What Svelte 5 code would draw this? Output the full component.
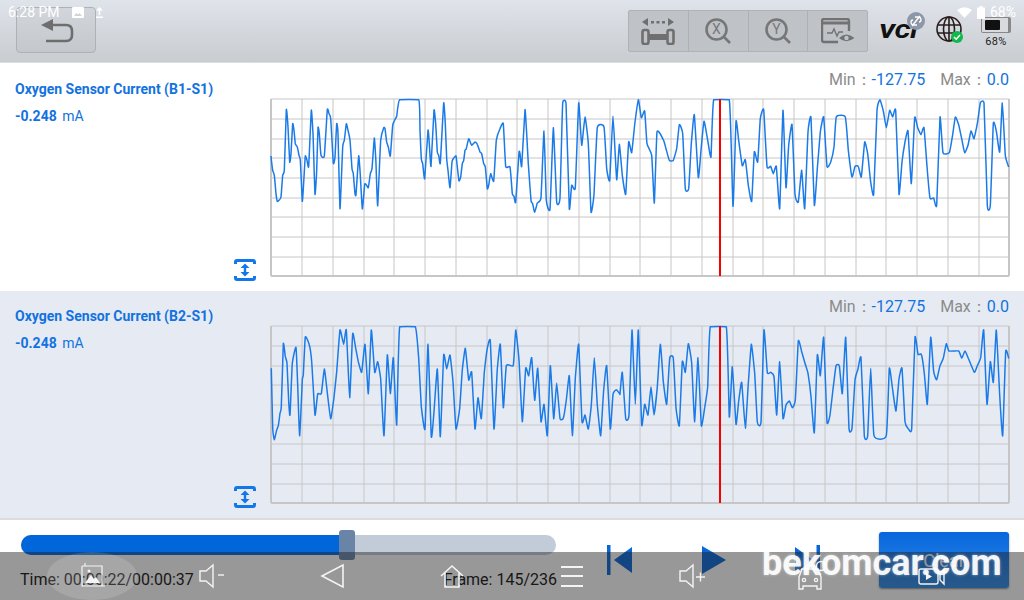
<script>
	// traces are read off at 3x, so each segment carries its own x offset
	const wave1 = [
		[220, '153,197 158,240 163,255 168,310 172,333 177,330 183,320 188,255 193,240 199,58 204,110 209,215 213,190 218,100 222,120 226,160 232,170 237,195 241,210 247,333 252,260 256,197 261,210 266,228 274,60 279,130 285,312 290,240 294,112 298,130 303,195 313,197 322,58 327,70 332,85 340,218 345,200 350,100 354,130 360,355 368,170 373,150 379,100 384,120 390,150 396,235 400,250 405,310 408,312 416,197 420,240 427,356 434,282 440,285 445,292 451,250 456,235 463,143 468,220 473,346 482,150 491,112 495,115 500,155 505,170 511,197 518,105 524,90 530,78 539,28 596,28 600,120 604,205 608,220 614,265 624,120 628,160 633,228 642,60 647,100 652,185 656,195 661,218 671,38 676,100 680,205 684,240 690,292 696,215 700,205 708,197 713,240 717,272 722,260 727,220 731,210 735,180 739,175 746,145 755,165 765,155 772,162 780,185 785,190 791,220 796,230 802,295 806,285 812,250 821,272 829,150 840,115 850,100 857,228 870,230 877,310 882,318 887,335 897,187'],
		[520, '0,190 5,228 15,58 20,130 25,220 33,330 38,340 44,366 52,338 63,322 72,122 79,330 90,356 100,112 110,335 120,322 128,38 138,38 148,355 155,285 166,292 176,38 185,165 195,80 205,160 213,365 222,312 232,112 252,110 260,235 269,270 279,78 290,268 298,162 307,255 317,312 326,155 335,187 345,95 355,28 364,82 374,62 381,160 395,195 403,338 411,125 430,148 438,175 448,210 460,210 470,175 478,103 488,130 496,295 506,295 514,160 523,73 535,262 543,180 552,93 563,150 573,200 581,28 628,28 639,348 648,93 656,150 667,226 676,208 685,285 695,333 703,185 713,215 721,85 731,58 741,228 752,228 760,250 769,228 779,355 789,60 798,292 806,165 816,103 825,312 835,335 845,240 854,355 864,125 873,82 883,345 892,235 901,125 911,80 921,228 932,215 942,170 949,80 976,80 985,180 996,260 1005,228 1015,228 1024,260 1034,155 1043,190 1052,275 1061,312 1071,60 1080,28 1090,62 1099,112 1109,60 1118,80 1127,60 1137,312 1146,215 1155,155 1164,122 1174,280 1184,82 1193,112 1203,133 1212,112 1221,228 1230,323 1241,323 1250,345 1260,80 1269,187 1288,187 1297,140 1306,80 1316,103 1325,145 1334,187 1344,165 1353,122 1362,145 1372,100 1381,38 1392,38 1402,345 1411,345 1420,100 1429,122 1439,185 1447,38 1456,195 1466,230']
	];
	const wave2 = [
		[220, '154,150 158,330 163,364 170,335 175,322 180,285 184,265 190,76 196,115 201,135 206,250 210,290 217,135 228,87 233,200 239,352 247,185 250,170 256,56 268,80 275,130 285,290 293,227 304,226 313,152 321,215 332,301 341,245 350,160 360,35 371,78 379,35 389,238 398,46 407,90 415,130 425,162 435,78 445,226 454,35 464,162 473,130 482,182 492,352 502,110 511,226 520,118 530,320 539,25 586,25 596,120 604,265 615,332 624,78 634,355 642,280 652,152 661,355 671,110 680,152 690,110 699,190 708,332 719,270 727,155 736,90 746,185 755,162 765,332 774,238 784,301 793,162 802,90 811,68 822,332 832,152 841,78 850,268 859,142 880,141 887,35 897,125 907,310 917,150 926,172 935,118 944,246 953,150 963,310 972,258 982,352 991,142 1001,301 1010,195 1020,300 1030,300 1039,245 1048,172 1057,352 1066,180 1076,78 1086,310 1095,290 1105,332 1114,260 1123,118 1132,260 1142,352 1151,215 1160,142 1171,332 1179,228 1189,214 1199,226'],
		[620, '0,226 7,162 17,300 27,290 36,35 46,258 55,35 65,320 74,258 84,290 93,205 102,290 112,205 121,78 130,190 140,258 149,120 160,120 168,268 178,322 187,130 196,162 205,76 215,135 224,310 234,118 244,322 254,268 263,205 271,25 319,25 328,296 337,145 348,318 356,248 365,192 376,330 385,195 394,78 404,165 412,311 423,311 432,35 442,162 452,162 462,175 470,290 479,130 489,300 498,260 508,248 517,268 526,245 535,68 545,100 555,135 564,165 573,235 583,343 592,110 601,172 611,57 621,311 630,290 640,205 648,142 658,142 667,226 677,57 687,330 696,330 705,185 714,152 723,118 733,352 743,352 752,150 762,352 799,352 808,150 818,215 828,278 837,182 846,150 855,310 865,331 875,331 885,57 894,108 904,108 913,165 922,258 932,57 941,160 950,184 960,142 970,120 979,76 987,98 1016,98 1025,120 1035,98 1045,120 1063,162 1072,142 1082,118 1091,35 1101,258 1111,130 1120,192 1129,35 1139,230 1148,352 1157,100 1166,120']
	];

	const vLines = [31, 62, 93, 123, 154, 185, 216, 246, 277, 308, 339, 369, 400, 431, 462, 492, 523, 554, 585, 615, 646, 677, 708, 738];
	const hLines = [20, 40, 59, 79, 99, 118, 138, 158];

	// light catmull-rom so the peaks round off like the device trace
	function toPath(segments, top) {
		const pts = [];
		for (const [left, raw] of segments) {
			for (const pair of raw.split(' ')) {
				const [x, y] = pair.split(',').map(Number);
				pts.push([left + x / 3 - 271, (y - top) / 3]);
			}
		}
		const k = 0.07;
		let d = `M${pts[0][0].toFixed(1)} ${pts[0][1].toFixed(1)}`;
		for (let i = 0; i < pts.length - 1; i++) {
			const a = pts[Math.max(i - 1, 0)];
			const b = pts[i];
			const c = pts[i + 1];
			const e = pts[Math.min(i + 2, pts.length - 1)];
			const c1x = b[0] + (c[0] - a[0]) * k;
			const c1y = Math.max(0.4, b[1] + (c[1] - a[1]) * k);
			const c2x = c[0] - (e[0] - b[0]) * k;
			const c2y = Math.max(0.4, c[1] - (e[1] - b[1]) * k);
			d += `C${c1x.toFixed(1)} ${c1y.toFixed(1)} ${c2x.toFixed(1)} ${c2y.toFixed(1)} ${c[0].toFixed(1)} ${c[1].toFixed(1)}`;
		}
		return d;
	}

	const channels = [
		{ name: 'Oxygen Sensor Current (B1-S1)', path: toPath(wave1, 26), alt: false },
		{ name: 'Oxygen Sensor Current (B2-S1)', path: toPath(wave2, 23), alt: true }
	];

	const navCells = ['image', 'voldown', 'back', 'home', 'menu', 'volup', 'car', 'video'];
</script>

<div class="screen">
	<header class="topbar">
		<button class="back" type="button" aria-label="Back">
			<svg width="36" height="26" viewBox="0 0 36 26">
				<path d="M3 8 L15 2 V14 Z" fill="#6e6e6e" />
				<path d="M13 8 H28 Q34 8 34 14 V18 Q34 24 28 24 H8" fill="none" stroke="#6e6e6e" stroke-width="2.6" />
			</svg>
		</button>
		<div class="tools">
			<div class="tool">
				<svg width="34" height="28" viewBox="0 0 34 28" fill="#6f6f6f">
					<path d="M1 5 L7 1 V9 Z M33 5 L27 1 V9 Z" />
					<path d="M10 4h3v2.4h-3z M15.5 4h3v2.4h-3z M21 4h3v2.4h-3z" />
					<rect x="1.5" y="13" width="6" height="14" rx="2" fill="none" stroke="#6f6f6f" stroke-width="2.6" />
					<rect x="26.5" y="13" width="6" height="14" rx="2" fill="none" stroke="#6f6f6f" stroke-width="2.6" />
					<rect x="7" y="17" width="20" height="6" />
				</svg>
			</div>
			<div class="tool">
				<svg width="26" height="26" viewBox="0 0 26 26" fill="none" stroke="#777" stroke-width="2.6">
					<circle cx="11.5" cy="11.5" r="10" />
					<path d="M19 19 L25 25" />
					<text x="11.5" y="16" text-anchor="middle" class="axis">X</text>
				</svg>
			</div>
			<div class="tool">
				<svg width="26" height="26" viewBox="0 0 26 26" fill="none" stroke="#777" stroke-width="2.6">
					<circle cx="11.5" cy="11.5" r="10" />
					<path d="M19 19 L25 25" />
					<text x="11.5" y="16" text-anchor="middle" class="axis">Y</text>
				</svg>
			</div>
			<div class="tool">
				<svg width="34" height="26" viewBox="0 0 34 26" fill="none" stroke="#727272" stroke-width="2.4">
					<path d="M17 24 H3 Q1 24 1 22 V3 Q1 1 3 1 H26 Q28 1 28 3 V13" />
					<path d="M1 5 H28" stroke-width="3" />
					<path d="M6 15 H11 L13 11 L16 18 L18 14 H22" stroke-width="1.4" />
					<path d="M18 20 Q25 13 33.5 20 Q25 26.5 18 20 Z" fill="#727272" stroke="none" />
					<circle cx="25.5" cy="20" r="2.2" fill="#c0c4c8" stroke="none" />
				</svg>
			</div>
		</div>
		<div class="vci">
			<span class="vci-mark">VCI</span>
			<span class="vci-link">
				<svg width="14" height="14" viewBox="0 0 14 14" fill="none" stroke="#fff" stroke-width="1.3">
					<path d="M6 3 H9 Q12 3 12 6 Q12 8 10 8 M8 11 H5 Q2 11 2 8 Q2 6 4 6 M3 12 L11 2" />
				</svg>
			</span>
		</div>
		<div class="globe">
			<svg width="28" height="28" viewBox="0 0 28 28" fill="none" stroke="#2a1d1d" stroke-width="1.6">
				<circle cx="13" cy="13" r="12" />
				<ellipse cx="13" cy="13" rx="5.5" ry="12" />
				<path d="M13 1 V25 M1.5 9 H24.5 M1.5 17 H24.5" />
				<circle cx="21" cy="21" r="6" fill="#12b84a" stroke="none" />
				<path d="M18 21 L20.2 23.2 L24 19" stroke="#fff" stroke-width="1.5" />
			</svg>
		</div>
		<div class="battery">
			<div class="cell"><div class="cell-fill"></div></div>
			<span>68%</span>
		</div>
	</header>

	<main>
		{#each channels as ch}
			<section class="row" class:alt={ch.alt}>
				<div class="info">
					<div class="title">{ch.name}</div>
					<div class="reading"><b>-0.248</b> <span>mA</span></div>
					<svg class="fit" width="22" height="22" viewBox="0 0 22 22" fill="#1277e8">
						<path d="M0 3 Q0 0 3 0 H19 Q22 0 22 3 V5 H19 V3 H3 V5 H0 Z" />
						<path d="M0 19 Q0 22 3 22 H19 Q22 22 22 19 V17 H19 V19 H3 V17 H0 Z" />
						<path d="M11 4.5 L15.5 9 H12.2 V13 H15.5 L11 17.5 L6.5 13 H9.8 V9 H6.5 Z" />
					</svg>
				</div>
				<div class="plot">
					<div class="range">
						<span class="lbl">Min：</span><span class="val">-127.75</span>
						<span class="lbl gap">Max：</span><span class="val">0.0</span>
					</div>
					<svg class="chart" width="740" height="179" viewBox="-1 -1 740 179">
						{#each vLines as x}
							<line x1={x} x2={x} y1="0" y2="177" />
						{/each}
						{#each hLines as y}
							<line x1="0" x2="738" y1={y} y2={y} />
						{/each}
						<line x1="0" x2="738" y1="0" y2="0" />
						<line class="edge" x1="0" x2="0" y1="0" y2="177" />
						<line class="edge" x1="738" x2="738" y1="0" y2="177" />
						<line class="edge" x1="0" x2="738" y1="177" y2="177" />
						<path class="trace" d={ch.path} />
						<line class="cursor" x1="449" x2="449" y1="0" y2="177" />
					</svg>
				</div>
			</section>
		{/each}
	</main>

	<footer>
		<div class="timeline">
			<div class="slider">
				<div class="slider-fill"></div>
				<div class="slider-knob"></div>
			</div>
			<div class="counters">
				<span>Time: 00:00:22/00:00:37</span>
				<span>Frame: 145/236</span>
			</div>
		</div>
		<div class="transport">
			<svg width="25" height="30" viewBox="0 0 25 30" fill="#0a66d8">
				<rect x="0" y="0" width="3.5" height="30" />
				<path d="M7 15 L25 2 V28 Z" />
			</svg>
			<svg width="24" height="28" viewBox="0 0 24 28" fill="#0a66d8"><path d="M0 0 L24 14 L0 28 Z" /></svg>
			<svg width="25" height="30" viewBox="0 0 25 30" fill="#0a66d8">
				<rect x="21.5" y="0" width="3.5" height="30" />
				<path d="M18 15 L0 2 V28 Z" />
			</svg>
		</div>
		<button class="clear" type="button">Clear</button>
	</footer>

	<!-- android chrome sits over the app -->
	<div class="status">
		<span class="clock">6:28 PM</span>
		<svg width="12" height="11" viewBox="0 0 12 11" fill="#fff">
			<path d="M1 0 H11 Q12 0 12 1 V10 Q12 11 11 11 H1 Q0 11 0 10 V1 Q0 0 1 0 Z M2 9 H10 L7.5 6 L6 7.5 L4.5 6 Z" fill-rule="evenodd" />
		</svg>
		<svg class="upload" width="7" height="11" viewBox="0 0 7 11" fill="#fff"><path d="M3.5 0 L7 3.5 H4.3 V8 H2.7 V3.5 H0 Z M0 9.5 H7 V11 H0 Z" /></svg>
		<span class="spacer"></span>
		<svg class="wifi" width="15" height="11" viewBox="0 0 15 11" fill="#fff"><path d="M0 3 Q7.5 -2.5 15 3 L7.5 11 Z" /></svg>
		<svg width="8" height="13" viewBox="0 0 8 13" fill="#fff"><path d="M2.5 0 H5.5 V1.5 H8 V13 H0 V1.5 H2.5 Z" /></svg>
		<span class="pct">68%</span>
	</div>

	<nav class="softkeys">
		{#each navCells as cell}
			<div class="softkey" class:active={cell === 'image'}>
				<svg width="32" height="32" viewBox="0 0 32 32" fill="none" stroke="#f4f4f4" stroke-width="1.4">
					{#if cell === 'image'}
						<path d="M6 6 H26 V26 M6 6 V26 H26 M9 6 V3 M26 26 H29" stroke-width="1.2" />
						<path d="M9 23 L15 15 L18 19 L20 17 L24 23 Z" fill="#f4f4f4" stroke="none" />
						<circle cx="13" cy="11" r="1.5" fill="#f4f4f4" stroke="none" />
					{:else if cell === 'voldown'}
						<path d="M4 11 H10 L17 5 V27 L10 21 H4 Z" />
						<path d="M22 15 H28" />
					{:else if cell === 'back'}
						<path d="M6 16 L27 5 V27 Z" stroke-width="1.6" />
					{:else if cell === 'home'}
						<path d="M5 16 L16 6 L27 16 M9 13 V27 H23 V13" stroke-width="1.6" />
					{:else if cell === 'menu'}
						<path d="M5 7 H27 M5 16 H27 M5 26 H27" stroke-width="1.8" />
					{:else if cell === 'volup'}
						<path d="M4 11 H10 L17 5 V27 L10 21 H4 Z" />
						<path d="M20 17 H29 M24.5 12.5 V21.5" />
					{:else if cell === 'car'}
						<path d="M3 17 L6 9 H22 L25 17 V29 H21 V26 H7 V29 H3 Z" />
						<circle cx="8" cy="20" r="1.6" /><circle cx="20" cy="20" r="1.6" />
						<circle cx="25" cy="6" r="4.5" />
					{:else}
						<rect x="3" y="9" width="19" height="15" rx="2" />
						<path d="M10 13 L16 16.5 L10 20 Z" fill="#f4f4f4" stroke="none" />
						<path d="M24 13 L28 9 V24 L24 20 Z" />
					{/if}
				</svg>
			</div>
		{/each}
		<span class="brand">bekomcar.com</span>
	</nav>
</div>

<style>
	:global(body) {
		margin: 0;
		overflow: hidden;
		font-family: Roboto, 'Liberation Sans', sans-serif;
	}

	.screen {
		position: relative;
		width: 1024px;
		height: 600px;
		overflow: hidden;
		background: #fff;
		display: flex;
		flex-direction: column;
	}

	.topbar {
		height: 62px;
		flex: none;
		box-sizing: border-box;
		display: flex;
		align-items: flex-start;
		background: linear-gradient(#dfe3ea, #c9cdd1);
		box-shadow: 0 1px 0 #dcdddf;
		padding-left: 16px;
	}

	.back {
		width: 80px;
		height: 46px;
		margin-top: 7px;
		padding: 0;
		box-sizing: border-box;
		border: 1px solid #aeb2b6;
		border-radius: 4px;
		background: linear-gradient(#d2d6dc, #c4c8cc);
		display: flex;
		align-items: center;
		justify-content: center;
	}

	.tools {
		margin: 10px 0 0 532px;
		width: 240px;
		height: 42px;
		display: flex;
		box-sizing: border-box;
		border: 1px solid #b0b3b6;
		border-radius: 2px;
		background: #bfc3c7;
	}

	.tool {
		flex: 1;
		display: flex;
		align-items: center;
		justify-content: center;
		border-left: 1px solid #aeb1b4;
	}

	.tool:first-child {
		border-left: 0;
	}

	.axis {
		font: 400 14px Roboto, sans-serif;
		fill: #777;
		stroke: none;
	}

	.vci {
		position: relative;
		width: 62px;
		margin: 22px 0 0 11px;
	}

	.vci-mark {
		display: inline-block;
		font: italic 900 20px/18px Roboto, sans-serif;
		color: #111;
		transform: scaleX(1.22);
		transform-origin: left center;
	}

	.vci-link {
		position: absolute;
		left: 28px;
		top: -10px;
		width: 18px;
		height: 18px;
		border-radius: 50%;
		background: #8d97a8;
		display: flex;
		align-items: center;
		justify-content: center;
	}

	.globe {
		margin: 16px 0 0 -5px;
		width: 28px;
		height: 28px;
	}

	.battery {
		margin: 17px 0 0 15px;
		width: 34px;
		display: flex;
		flex-direction: column;
		align-items: center;
		font-size: 11px;
		color: #222;
		letter-spacing: 0.4px;
	}

	.cell {
		width: 30px;
		height: 16px;
		box-sizing: border-box;
		border: 1px solid #888;
		border-right-width: 3px;
		border-radius: 2px;
		padding: 2px 3px;
		margin-bottom: 2px;
		background: #d8dade;
	}

	.cell-fill {
		width: 15px;
		height: 100%;
		background: #111;
		border-radius: 1px;
	}

	main {
		margin-top: 2px;
		flex: none;
	}

	.row {
		height: 227px;
		display: flex;
		background: #fff;
	}

	.row.alt {
		background: #e6ebf3;
	}

	.info {
		position: relative;
		width: 270px;
		flex: none;
		box-sizing: border-box;
		padding: 17px 0 0 15px;
		color: #1272e0;
	}

	.title {
		font-size: 14px;
		font-weight: 700;
		line-height: 17px;
	}

	.reading {
		margin-top: 10px;
		font-size: 14px;
		line-height: 16px;
	}

	.reading b {
		margin-right: 2px;
	}

	.fit {
		position: absolute;
		left: 234px;
		top: 195px;
	}

	.plot {
		flex: 1;
	}

	.range {
		height: 34px;
		box-sizing: border-box;
		padding: 7px 15px 0 0;
		text-align: right;
		font-size: 16px;
		line-height: 17px;
		white-space: nowrap;
	}

	.lbl {
		color: #8b8b8b;
	}

	.lbl.gap {
		margin-left: 11px;
	}

	.val {
		color: #1272e0;
	}

	.chart {
		display: block;
	}

	.chart line {
		stroke: #c6c6c6;
		stroke-width: 1;
	}

	.chart line.edge {
		stroke-width: 2;
	}

	.chart line.cursor {
		stroke: #f60000;
		stroke-width: 2;
	}

	.trace {
		fill: none;
		stroke: #1a7ae8;
		stroke-width: 1.5;
		stroke-linejoin: round;
	}

	footer {
		flex: 1;
		border-top: 2px solid #dcdcdc;
		display: flex;
		background: #fff;
		box-sizing: border-box;
	}

	.timeline {
		width: 537px;
		margin-left: 20px;
		padding-top: 15px;
	}

	.slider {
		position: relative;
		width: 535px;
		height: 20px;
		margin-left: 1px;
		border-radius: 10px;
		background: #c2cbd8;
	}

	.slider-fill {
		width: 326px;
		height: 100%;
		background: #0066d9;
		border-radius: 10px 0 0 10px;
	}

	.slider-knob {
		position: absolute;
		left: 318px;
		top: -5px;
		width: 16px;
		height: 30px;
		border-radius: 3px;
		background: #6a84a8;
	}

	.counters {
		display: flex;
		justify-content: space-between;
		margin-top: 16px;
		font-size: 16px;
		line-height: 18px;
		color: #111;
		white-space: nowrap;
	}

	.transport {
		margin: 25px 0 0 50px;
		width: 213px;
		height: 30px;
		display: flex;
		justify-content: space-between;
		align-items: center;
	}

	.clear {
		margin: 12px 0 0 59px;
		width: 130px;
		height: 56px;
		padding: 0;
		border: 0;
		border-radius: 3px;
		background: linear-gradient(#0866dc, #2f8ce8);
		color: #fff;
		font: 400 18px Roboto, sans-serif;
		box-shadow: 0 1px 2px rgba(0, 0, 0, 0.45);
	}

	.status {
		position: absolute;
		left: 8px;
		right: 8px;
		top: 3px;
		height: 18px;
		display: flex;
		align-items: center;
		gap: 8px;
		color: #fff;
		font-size: 14px;
	}

	.clock {
		margin-right: 4px;
	}

	.upload {
		margin-left: 4px;
	}

	.spacer {
		flex: 1;
	}

	.wifi {
		margin-right: -3px;
	}

	.pct {
		margin-left: -3px;
	}

	.softkeys {
		position: absolute;
		left: 0;
		right: 0;
		bottom: 0;
		height: 48px;
		padding-left: 32px;
		display: flex;
		background: rgba(30, 30, 30, 0.46);
	}

	.softkey {
		position: relative;
		width: 120px;
		display: flex;
		align-items: center;
		justify-content: center;
	}

	.softkey.active::before {
		content: '';
		position: absolute;
		left: 15px;
		width: 90px;
		height: 48px;
		border-radius: 45px / 24px;
		background: rgba(255, 255, 255, 0.14);
	}

	.softkey svg {
		position: relative;
	}

	.brand {
		position: absolute;
		left: 762px;
		top: -8px;
		font-size: 36px;
		font-weight: 700;
		line-height: 38px;
		color: rgba(255, 255, 255, 0.92);
		text-shadow: 0 0 3px rgba(255, 255, 255, 0.5);
	}
</style>
